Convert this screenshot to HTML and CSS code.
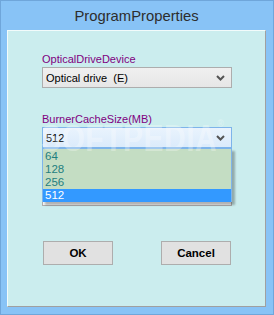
FILE: index.html
```html
<!DOCTYPE html>
<html lang="en">
<head>
    <meta charset="UTF-8">
    <title>ProgramProperties</title>
    <link rel="stylesheet" href="styles.css">
</head>
<body>
    <div class="window">
        <div class="title-bar">ProgramProperties</div>

        <div class="client">
            <div class="field">
                <label class="field-label">OpticalDriveDevice</label>
                <div class="combo">
                    <span class="combo-text">Optical drive&nbsp; (E)</span>
                    <svg class="chevron" width="9" height="6" viewBox="0 0 9 6"><polyline points="1,1 4.5,4.5 8,1" fill="none" stroke="#555" stroke-width="2"/></svg>
                </div>
            </div>

            <div class="field field-second">
                <label class="field-label">BurnerCacheSize(MB)</label>
                <div class="combo combo-open">
                    <span class="combo-text">512</span>
                    <svg class="chevron" width="9" height="6" viewBox="0 0 9 6"><polyline points="1,1 4.5,4.5 8,1" fill="none" stroke="#555" stroke-width="2"/></svg>

                    <!-- dropped down list -->
                    <ul class="combo-list">
                        <li>64</li>
                        <li>128</li>
                        <li>256</li>
                        <li class="selected">512</li>
                    </ul>
                </div>
                <div class="hidden-box"></div>
            </div>

            <div class="button-row">
                <button class="dlg-button">OK</button>
                <button class="dlg-button">Cancel</button>
            </div>

            <div class="watermark">SOFTPEDIA<span class="reg">&reg;</span></div>
        </div>
    </div>
</body>
</html>
```

FILE: styles.css
```css
:root {
    --frame: #88c3f6;
    --frame-edge: #6fa6da;
    --client: #cbedee;
    --purple: #800080;
    --gray-border: #adadad;
    --focus: #7eb4ea;
}

* {
    margin: 0;
    padding: 0;
    box-sizing: border-box;
}

body {
    font-family: 'Liberation Sans', Arial, sans-serif;
    background: var(--frame);
}

.window {
    width: 274px;
    height: 315px;
    border: 1px solid var(--frame-edge);
    background: var(--frame);
    padding: 0 7px 7px 6px;
    display: flex;
    flex-direction: column;
}

.title-bar {
    height: 29px;
    line-height: 30px;
    text-align: center;
    font-size: 14.8px;
    color: #2d2d2d;
}

.client {
    flex: 1;
    position: relative;
    background: var(--client);
    border-top: 1px solid #f2fbfb;
    border-left: 1px solid #f2fbfb;
    border-right: 1px solid #a0a0a0;
    border-bottom: 1px solid #a0a0a0;
    padding: 21px 0 0 34px;
    font-size: 11px;
}

.field {
    width: 190px;
}

.field-second {
    margin-top: 24px;
}

.field-label {
    display: block;
    height: 14px;
    line-height: 14px;
    color: var(--purple);
    margin-bottom: 1px;
}

.combo {
    position: relative;
    height: 21px;
    border: 1px solid var(--gray-border);
    background: linear-gradient(#f0f0f0, #e6e6e6);
    display: flex;
    align-items: center;
    justify-content: space-between;
    padding: 0 6px 0 3px;
    color: #000;
}

.combo-open {
    border-color: var(--focus);
    background: linear-gradient(#e9f3fd, #dbebfb);
    z-index: 2;
}

.chevron {
    display: block;
}

.combo-list {
    position: absolute;
    top: 20px;
    left: -1px;
    width: 190px;
    list-style: none;
    background: #c4ddc3;
    border: 1px solid var(--focus);
    border-bottom: none;
    padding-top: 1px;
    box-shadow: 3px 3px 2px rgba(0, 0, 0, 0.28);
}

.combo-list li {
    height: 13px;
    line-height: 13px;
    padding-left: 2px;
    color: #1f7f7f;
    font-size: 11.5px;
}

.combo-list li.selected {
    background: #3399ff;
    color: #fff;
}

.hidden-box {
    height: 50px;
    margin-top: 8px;
    border: 1px solid var(--gray-border);
    background: #f4f6f6;
}

.button-row {
    width: 188px;
    margin: 35px 0 0 1px;
    display: flex;
    justify-content: space-between;
}

.dlg-button {
    width: 70px;
    height: 24px;
    border: 1px solid var(--gray-border);
    background: #e1e1e1;
    font-family: 'Liberation Sans', Arial, sans-serif;
    font-weight: bold;
    font-size: 11.5px;
    color: #000;
}

.watermark {
    position: absolute;
    top: 86px;
    left: 33px;
    font-size: 30px;
    font-weight: bold;
    letter-spacing: 0.5px;
    color: rgba(255, 255, 255, 0.3);
    transform: scaleY(1.25);
    transform-origin: top left;
    pointer-events: none;
    z-index: 3;
}

.watermark .reg {
    font-size: 9px;
    vertical-align: top;
}
```
